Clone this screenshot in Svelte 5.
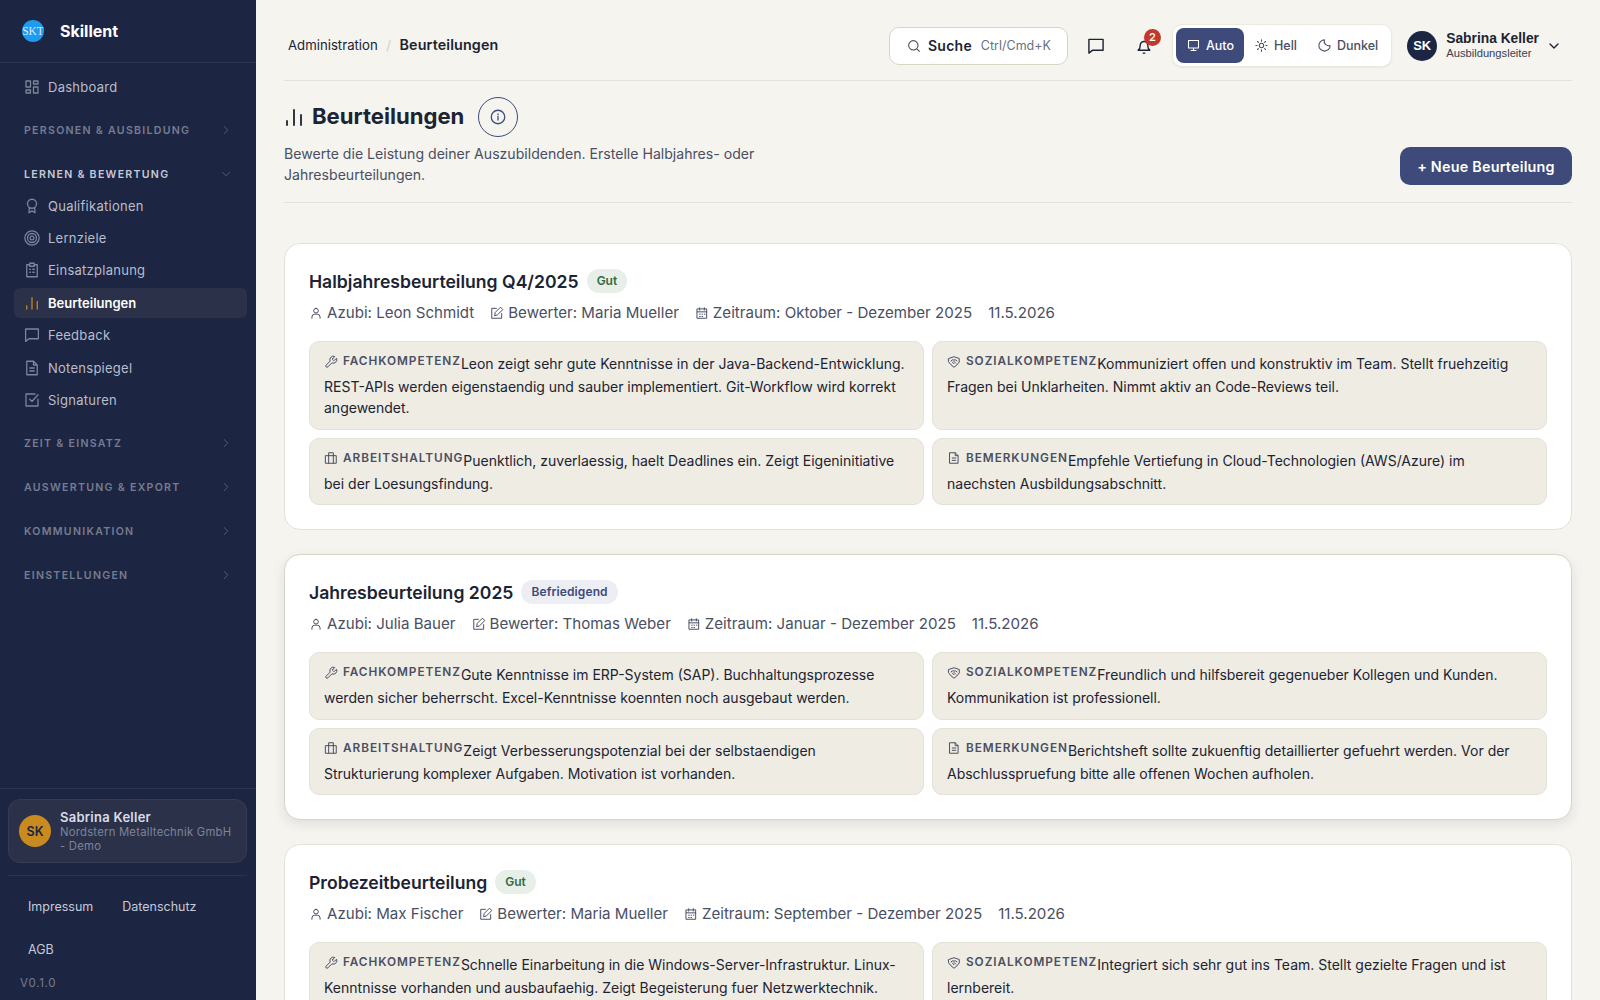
<script>
  const paths = {
    dash: 'M4 4h6v8H4zM14 4h6v4h-6zM14 12h6v8h-6zM4 16h6v4H4z',
    award: 'M12 3a6 6 0 1 0 0 12 6 6 0 0 0 0-12zM8.500 14 8 21l4-2.500 4 2.500-.5-7',
    clip: 'M9 3h6v4H9zM9 5H5v16h14V5h-4M9 11h1M13 11h2M9 15h1M13 15h2',
    bars: 'M5 20v-4M12 20V5M19 20V10',
    chat: 'M3.500 4h17v13H8l-4.500 3.500z',
    doc: 'M5 3h9l5 5v13H5zM14 3v5h5M9 12h6M9 16h6',
    check: 'M20 11v9H4V4h12M9 11l3 3 8-9',
    user: 'M12 4a4 4 0 1 0 0 8 4 4 0 0 0 0-8zM5 21v-2a5 5 0 0 1 5-5h4a5 5 0 0 1 5 5v2',
    edit: 'M11 4H3v17h17v-8M8 16l1-5 9-9 4 4-9 9z',
    cal: 'M4 5h16v16H4zM8 3v4M16 3v4M4 10h16M8 14h1M12 14h1M16 14h1M8 18h1M12 18h1',
    wrench: 'M14.700 6.300a1 1 0 0 0 0 1.400l1.600 1.600a1 1 0 0 0 1.400 0l3.770-3.770a6 6 0 0 1-7.940 7.940l-6.910 6.910a2.120 2.120 0 0 1-3-3l6.910-6.910a6 6 0 0 1 7.940-7.940l-3.760 3.760z',
    hands: 'M3 6l9-3 9 3v6l-4 5-5 4-5-4-4-5zM7 10l3-2 2 1 2-1 3 2M9 12l3 3M12 11l3 3',
    case: 'M3 8h18v13H3zM8 8V3h8v5M8 8v13M16 8v13',
    search: 'M11 4a7 7 0 1 0 0 14 7 7 0 0 0 0-14zM20 20l-4-4',
    bell: 'M5 17c1.500-1 2.500-2.500 2.500-6a4.500 4.500 0 0 1 9 0c0 3.500 1 5 2.500 6zM11 20.500h2',
    monitor: 'M4 4h16v12H4zM12 16v4M8 20h8',
    moon: 'M12 3a9 9 0 1 0 9 9 7 7 0 0 1-9-9z',
    info: 'M12 3a9 9 0 1 0 0 18 9 9 0 0 0 0-18zM12 11v5M12 8v.5',
    right: 'M9 6l6 6-6 6',
    down: 'M6 9l6 6 6-6'
  };

  const learn = [
    ['award', 'Qualifikationen'],
    ['target', 'Lernziele'],
    ['clip', 'Einsatzplanung'],
    ['bars', 'Beurteilungen'],
    ['chat', 'Feedback'],
    ['doc', 'Notenspiegel'],
    ['check', 'Signaturen']
  ];
  const closedSections = ['Zeit & Einsatz', 'Auswertung & Export', 'Kommunikation', 'Einstellungen'];

  const reviews = [
    {
      title: 'Halbjahresbeurteilung Q4/2025', grade: 'Gut', tone: 'good',
      azubi: 'Leon Schmidt', rater: 'Maria Mueller', span: 'Oktober - Dezember 2025',
      items: [
        ['wrench', 'Fachkompetenz', 'Leon zeigt sehr gute Kenntnisse in der Java-Backend-Entwicklung. REST-APIs werden eigenstaendig und sauber implementiert. Git-Workflow wird korrekt angewendet.'],
        ['hands', 'Sozialkompetenz', 'Kommuniziert offen und konstruktiv im Team. Stellt fruehzeitig Fragen bei Unklarheiten. Nimmt aktiv an Code-Reviews teil.'],
        ['case', 'Arbeitshaltung', 'Puenktlich, zuverlaessig, haelt Deadlines ein. Zeigt Eigeninitiative bei der Loesungsfindung.'],
        ['doc', 'Bemerkungen', 'Empfehle Vertiefung in Cloud-Technologien (AWS/Azure) im naechsten Ausbildungsabschnitt.']
      ]
    },
    {
      title: 'Jahresbeurteilung 2025', grade: 'Befriedigend', tone: 'ok', hover: true,
      azubi: 'Julia Bauer', rater: 'Thomas Weber', span: 'Januar - Dezember 2025',
      items: [
        ['wrench', 'Fachkompetenz', 'Gute Kenntnisse im ERP-System (SAP). Buchhaltungsprozesse werden sicher beherrscht. Excel-Kenntnisse koennten noch ausgebaut werden.'],
        ['hands', 'Sozialkompetenz', 'Freundlich und hilfsbereit gegenueber Kollegen und Kunden. Kommunikation ist professionell.'],
        ['case', 'Arbeitshaltung', 'Zeigt Verbesserungspotenzial bei der selbstaendigen Strukturierung komplexer Aufgaben. Motivation ist vorhanden.'],
        ['doc', 'Bemerkungen', 'Berichtsheft sollte zukuenftig detaillierter gefuehrt werden. Vor der Abschlusspruefung bitte alle offenen Wochen aufholen.']
      ]
    },
    {
      title: 'Probezeitbeurteilung', grade: 'Gut', tone: 'good',
      azubi: 'Max Fischer', rater: 'Maria Mueller', span: 'September - Dezember 2025',
      items: [
        ['wrench', 'Fachkompetenz', 'Schnelle Einarbeitung in die Windows-Server-Infrastruktur. Linux-Kenntnisse vorhanden und ausbaufaehig. Zeigt Begeisterung fuer Netzwerktechnik.'],
        ['hands', 'Sozialkompetenz', 'Integriert sich sehr gut ins Team. Stellt gezielte Fragen und ist lernbereit.']
      ]
    }
  ];
</script>

{#snippet icon(name, size = 16, sw = 1.7)}
  <svg class="ic" width={size} height={size} viewBox="0 0 24 24" fill="none" stroke="currentColor" stroke-width={sw} stroke-linecap="round" stroke-linejoin="round">
    {#if name === 'target'}
      <circle cx="12" cy="12" r="9.500" /><circle cx="12" cy="12" r="6" /><circle cx="12" cy="12" r="2.500" />
    {:else if name === 'sun'}
      <circle cx="12" cy="12" r="3.500" /><path d="M12 3v2M12 19v2M3 12h2M19 12h2M5.600 5.600 7 7M17 17l1.400 1.400M5.600 18.400 7 17M17 7l1.400-1.400" />
    {:else}
      <path d={paths[name]} />
    {/if}
  </svg>
{/snippet}

<div class="shell">
  <aside class="sidebar">
    <div class="brand">
      <span class="logo">SKT</span>
      <span class="brand-name">Skillent</span>
    </div>
    <nav class="nav">
      <a class="link" href="#top">{@render icon('dash', 18)}Dashboard</a>
      <div class="section">Personen &amp; Ausbildung <span class="sec-ic">{@render icon('right', 14, 1.5)}</span></div>
      <div class="section open">Lernen &amp; Bewertung <span class="sec-ic">{@render icon('down', 14, 1.5)}</span></div>
      {#each learn as [ic, label]}
        <a class="link" class:active={label === 'Beurteilungen'} href="#top">{@render icon(ic, 18)}{label}</a>
      {/each}
      {#each closedSections as s}
        <div class="section">{s} <span class="sec-ic">{@render icon('right', 14, 1.5)}</span></div>
      {/each}
    </nav>
    <div class="side-foot">
      <div class="who">
        <span class="who-av">SK</span>
        <div>
          <div class="who-name">Sabrina Keller</div>
          <div class="who-org">Nordstern Metalltechnik GmbH - Demo</div>
        </div>
      </div>
      <div class="legal">
        <a href="#top">Impressum</a>
        <a href="#top">Datenschutz</a>
        <a href="#top">AGB</a>
      </div>
      <div class="version">v0.1.0</div>
    </div>
  </aside>

  <main class="main">
    <header class="topbar">
      <div class="crumbs">
        <span>Administration</span>
        <span class="slash">/</span>
        <b>Beurteilungen</b>
      </div>
      <div class="top-right">
        <button class="search">
          {@render icon('search', 16)}
          <span class="search-t">Suche</span>
          <span class="search-k">Ctrl/Cmd+K</span>
        </button>
        <button class="tool">{@render icon('chat', 20)}</button>
        <button class="tool bell">{@render icon('bell', 20)}<span class="badge">2</span></button>
        <div class="theme">
          <button class="mode on">{@render icon('monitor', 15)}Auto</button>
          <button class="mode">{@render icon('sun', 15)}Hell</button>
          <button class="mode">{@render icon('moon', 15)}Dunkel</button>
        </div>
        <div class="account">
          <span class="acc-av">SK</span>
          <div class="acc-txt">
            <div class="acc-name">Sabrina Keller</div>
            <div class="acc-role">Ausbildungsleiter</div>
          </div>
          <span class="acc-chev">{@render icon('down', 16, 2)}</span>
        </div>
      </div>
    </header>

    <section class="head">
      <div>
        <div class="title-row">
          <span class="title-ic">{@render icon('bars', 24, 1.800)}</span>
          <h1>Beurteilungen</h1>
          <button class="info">{@render icon('info', 18)}</button>
        </div>
        <p class="desc">Bewerte die Leistung deiner Auszubildenden. Erstelle Halbjahres- oder Jahresbeurteilungen.</p>
      </div>
      <button class="primary">+ Neue Beurteilung</button>
    </section>

    <div class="cards">
      {#each reviews as r}
        <article class="card" class:hover={r.hover}>
          <div class="card-head">
            <h2>{r.title}</h2>
            <span class="pill {r.tone}">{r.grade}</span>
          </div>
          <div class="meta">
            <span>{@render icon('user', 14)}Azubi: {r.azubi}</span>
            <span>{@render icon('edit', 14)}Bewerter: {r.rater}</span>
            <span>{@render icon('cal', 14)}Zeitraum: {r.span}</span>
            <span>11.5.2026</span>
          </div>
          <div class="grid">
            {#each r.items as [ic, label, text]}
              <div class="item">
                <span class="item-label">{@render icon(ic, 14)}{label}</span>{text}
              </div>
            {/each}
          </div>
        </article>
      {/each}
    </div>
  </main>
</div>

<style>
  :global(body) {
    background: #f5f4ef;
    font-family: Inter, "Liberation Sans", sans-serif;
    color: #1c2333;
  }
  a {
    color: inherit;
    text-decoration: none;
  }
  button {
    font: inherit;
    background: none;
    border: none;
    cursor: pointer;
    padding: 0;
    color: inherit;
  }
  .ic {
    flex: none;
  }
  .shell {
    display: flex;
    height: 100vh;
    overflow: hidden;
  }

  .sidebar {
    width: 256px;
    flex: none;
    background: #1c2541;
    display: flex;
    flex-direction: column;
    color: #c6cad8;
  }
  .brand {
    height: 63px;
    box-sizing: border-box;
    border-bottom: 1px solid #2a3350;
    display: flex;
    align-items: center;
    gap: 16px;
    padding: 0 22px;
  }
  .logo {
    width: 22px;
    height: 22px;
    border-radius: 50%;
    background: #1e9bf0;
    color: #d5ecfb;
    font: 11.500px "Liberation Serif", serif;
    display: flex;
    align-items: center;
    justify-content: center;
    overflow: hidden;
  }
  .brand-name {
    font-size: 16px;
    font-weight: 700;
    color: #fff;
  }
  .nav {
    flex: 1;
    padding: 9px 9px 0 14px;
    display: flex;
    flex-direction: column;
  }
  .link {
    display: flex;
    align-items: center;
    gap: 7px;
    height: 30.400px;
    margin-bottom: 2px;
    padding-left: 9px;
    font-size: 13px;
    letter-spacing: 0.02em;
    border-radius: 6px;
    color: #b9bdcd;
  }
  .link .ic {
    color: #7e859c;
  }
  .link.active {
    background: #2a3149;
    color: #fff;
    font-weight: 600;
    letter-spacing: 0;
  }
  .link.active .ic {
    color: #c98a1f;
  }
  .section {
    display: flex;
    justify-content: space-between;
    align-items: center;
    height: 32px;
    margin: 10px 0 2px;
    padding: 0 14px 0 10px;
    font-size: 10.600px;
    font-weight: 600;
    text-transform: uppercase;
    letter-spacing: 0.12em;
    color: #767c92;
  }
  .section.open {
    margin-bottom: 0;
    color: #c6cad8;
  }
  .sec-ic {
    display: flex;
    color: #5d647c;
  }
  .side-foot {
    border-top: 1px solid #2a3350;
    padding: 10px 9px 10px 8px;
  }
  .who {
    display: flex;
    align-items: center;
    gap: 9px;
    height: 64px;
    box-sizing: border-box;
    padding: 0 10px;
    background: #2a3149;
    border: 1px solid #343c58;
    border-radius: 12px;
  }
  .who-av {
    width: 32px;
    height: 32px;
    flex: none;
    border-radius: 50%;
    background: #c98a1f;
    color: #1c2541;
    font-size: 12.500px;
    font-weight: 600;
    display: flex;
    align-items: center;
    justify-content: center;
  }
  .who-name {
    font-size: 13px;
    font-weight: 600;
    color: #d8dcea;
    letter-spacing: 0.02em;
  }
  .who-org {
    font-size: 11.300px;
    line-height: 14px;
    color: #7e849a;
    letter-spacing: 0.02em;
  }
  .legal {
    border-top: 1px solid #2a3350;
    margin-top: 12px;
    padding: 9px 0 0 20px;
    display: flex;
    flex-wrap: wrap;
    column-gap: 29px;
    font-size: 12.500px;
    color: #c6cad8;
  }
  .legal a {
    line-height: 43px;
  }
  .version {
    padding: 5px 0 0 12px;
    font-size: 11.500px;
    text-transform: uppercase;
    letter-spacing: 0.06em;
    color: #767c92;
  }

  .main {
    flex: 1;
    min-width: 0;
    padding: 0 28px;
    overflow: hidden;
  }
  .topbar {
    height: 81px;
    box-sizing: border-box;
    border-bottom: 1px solid #e4e2d6;
    display: flex;
    align-items: center;
    justify-content: space-between;
    padding: 11px 10px 0 0;
  }
  .crumbs {
    display: flex;
    align-items: center;
    gap: 8.500px;
    padding: 0 0 2px 4px;
    font-size: 13.200px;
  }
  .crumbs b {
    font-size: 14.300px;
    font-weight: 600;
    letter-spacing: 0.01em;
  }
  .slash {
    color: #d4d1c2;
  }
  .top-right {
    display: flex;
    align-items: center;
  }
  .search {
    display: flex;
    align-items: center;
    width: 179px;
    height: 38px;
    box-sizing: border-box;
    padding: 0 16px;
    background: #fff;
    border: 1px solid #d8d5c4;
    border-radius: 10px;
  }
  .search .ic {
    color: #4a4f63;
  }
  .search-t {
    margin-left: 6px;
    font-size: 14px;
    font-weight: 600;
    letter-spacing: 0.02em;
  }
  .search-k {
    margin-left: auto;
    font-size: 12.500px;
    color: #6b7082;
  }
  .tool {
    display: flex;
    position: relative;
    margin-left: 18px;
    width: 20px;
  }
  .tool.bell {
    margin-left: 28px;
  }
  .badge {
    position: absolute;
    top: -7px;
    left: 10px;
    width: 17px;
    height: 17px;
    border-radius: 50%;
    background: #c0392b;
    color: #fff;
    font-size: 11px;
    font-weight: 600;
    display: flex;
    align-items: center;
    justify-content: center;
  }
  .theme {
    margin-left: 18px;
    height: 43px;
    box-sizing: border-box;
    padding: 3px;
    display: flex;
    background: #fff;
    border: 1px solid #ebe9e0;
    border-radius: 10px;
    box-shadow: 0 1px 2px rgba(0, 0, 0, 0.06);
  }
  .mode {
    display: flex;
    align-items: center;
    gap: 5px;
    padding: 0 10px;
    font-size: 12.500px;
    font-weight: 500;
    color: #4a4f63;
    border-radius: 8px;
  }
  .mode.on {
    background: #3d4a7a;
    color: #fff;
  }
  .account {
    display: flex;
    align-items: center;
    margin-left: 15px;
    gap: 9px;
    font-family: "Liberation Sans", sans-serif;
  }
  .acc-av {
    width: 30px;
    height: 30px;
    border-radius: 50%;
    background: #1c2541;
    color: #fff;
    font-size: 13px;
    font-weight: 700;
    display: flex;
    align-items: center;
    justify-content: center;
  }
  .acc-name {
    font-size: 13.800px;
    font-weight: 700;
    line-height: 14px;
  }
  .acc-role {
    font-size: 11.200px;
    line-height: 14px;
    color: #3b4052;
  }
  .acc-chev {
    display: flex;
    margin-left: -2px;
  }

  .head {
    display: flex;
    justify-content: space-between;
    align-items: flex-end;
    border-bottom: 1px solid #e4e2d6;
    padding: 16px 0 17px;
  }
  .title-row {
    display: flex;
    align-items: center;
    gap: 6px;
  }
  .title-ic {
    display: flex;
    margin-left: -2px;
  }
  h1 {
    margin: 0;
    padding-bottom: 2px;
    font-size: 22.100px;
    font-weight: 700;
  }
  .info {
    width: 40px;
    height: 40px;
    margin-left: 8px;
    border: 1px solid #3d4a7a;
    border-radius: 50%;
    color: #3d4a7a;
    display: flex;
    align-items: center;
    justify-content: center;
  }
  .desc {
    margin: 6px 0 0;
    max-width: 490px;
    font-size: 14.100px;
    line-height: 21px;
    color: #4a4f63;
  }
  .primary {
    height: 38px;
    width: 172px;
    background: #3d4a7a;
    color: #fff;
    font-size: 14.400px;
    font-weight: 600;
    letter-spacing: 0.2px;
    border-radius: 10px;
  }

  .cards {
    padding-top: 40px;
    display: flex;
    flex-direction: column;
    gap: 24px;
  }
  .card {
    background: #fff;
    border: 1px solid #e4e2d6;
    border-radius: 16px;
    padding: 24px;
  }
  .card.hover {
    border-color: #d8d5c4;
    box-shadow: 0 4px 12px rgba(28, 37, 65, 0.1);
  }
  .card-head {
    display: flex;
    align-items: center;
    gap: 8px;
    height: 26px;
  }
  h2 {
    margin: 0;
    font-size: 17.600px;
    font-weight: 600;
  }
  .pill {
    font-size: 12px;
    font-weight: 600;
    padding: 0 10px;
    line-height: 24px;
    border-radius: 12px;
  }
  .pill.good {
    background: #e8efe9;
    color: #2f6b46;
  }
  .pill.ok {
    background: #eceef4;
    color: #3d4a7a;
    letter-spacing: 0.01em;
  }
  .meta {
    display: flex;
    gap: 16px;
    margin-top: 6px;
    font-size: 15.100px;
    line-height: 26px;
    color: #4a4f63;
  }
  .meta span {
    display: flex;
    align-items: center;
    gap: 4px;
  }
  .grid {
    display: grid;
    grid-template-columns: 1fr 1fr;
    gap: 8px;
    margin-top: 15px;
  }
  .item {
    background: #eeece3;
    border: 1px solid #e4e2d6;
    border-radius: 10px;
    padding: 9px 14px 10.500px;
    font-size: 14px;
    line-height: 21px;
    color: #1c2333;
  }
  .item-label {
    display: inline-flex;
    align-items: center;
    gap: 5px;
    margin-bottom: 4px;
    font-size: 11.800px;
    font-weight: 600;
    text-transform: uppercase;
    letter-spacing: 0.08em;
    color: #4a4f63;
  }
</style>
